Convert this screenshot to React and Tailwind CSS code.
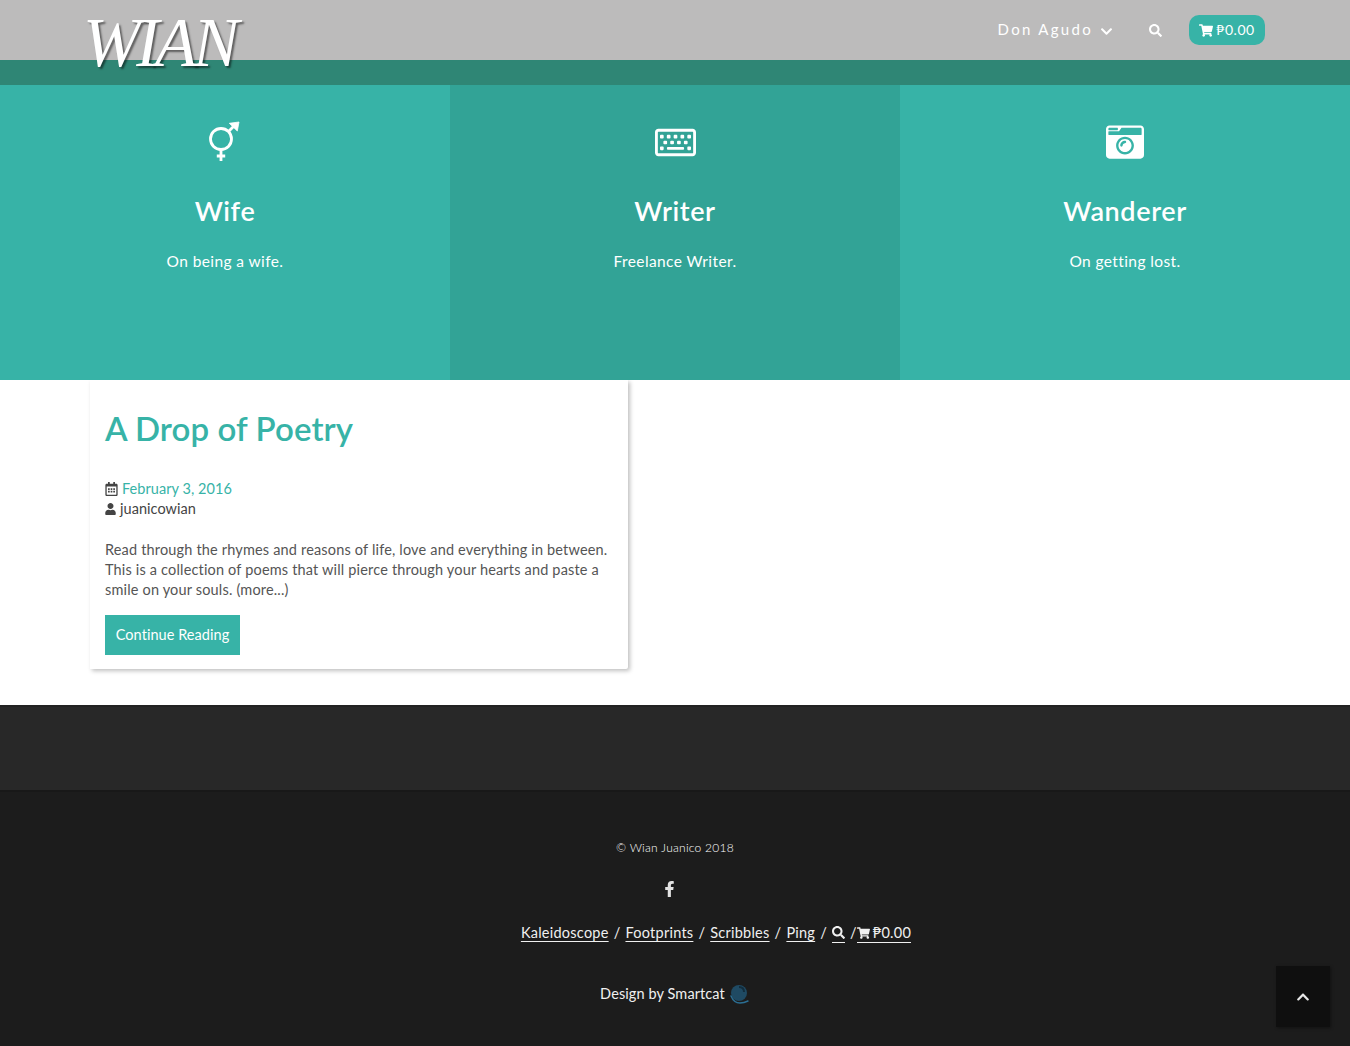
import React from "react";
import { FaRegKeyboard, FaCameraRetro, FaShoppingCart, FaSearch, FaChevronDown, FaChevronUp, FaUser, FaFacebookF, FaRegCalendarAlt } from "react-icons/fa";

const body = { fontFamily: '"Lato", "Open Sans", sans-serif' };

function GenderIcon() {
  return (
    <svg className="-mt-[4px] -ml-[2px]" width="36" height="44" viewBox="0 0 36 44" fill="none" stroke="white" strokeWidth="2.8">
      <circle cx="15" cy="21" r="10.5" />
      <path d="M22.5 13.5L30 6" />
      <path d="M23.3 5.3L33 4L31.3 13Z" fill="white" strokeWidth="0.8" />
      <path d="M15 31.5V43M10.8 38H19.2" />
    </svg>
  );
}

function Feature({ icon, title, text, dark }) {
  return (
    <div className={`flex-1 h-[295px] flex flex-col items-center text-white ${dark ? "bg-[#32a396]" : "bg-[#37b3a7]"}`}>
      <div className="h-[111px] flex items-center justify-center pt-[2px]">{icon}</div>
      <h3 className="text-[27px] leading-[30px] font-semibold tracking-[0.6px]">{title}</h3>
      <p className="mt-[23px] text-[15.5px] leading-[24px] font-normal tracking-[0.4px]">{text}</p>
    </div>
  );
}

function Sep() {
  return <span className="mx-[5px]">/</span>;
}

export default function App() {
  return (
    <div style={body} className="relative w-full h-[1046px] overflow-hidden bg-white text-[#555]">
      <header className="relative z-10 h-[60px] bg-[#bcbbbb] flex items-start pl-[83px] pr-[85px]">
        <div
          className="mt-[9px] h-[50px] text-[69px] leading-[69px] italic text-white tracking-[-4.2px] [text-shadow:2px_2px_2px_rgba(0,0,0,0.5)]"
          style={{ fontFamily: '"Liberation Serif", serif' }}
        >
          WIAN
        </div>
        <nav className="ml-auto h-[60px] flex items-center text-white">
          <span className="text-[15px] tracking-[2.3px] font-normal pb-[2px]">Don Agudo</span>
          <FaChevronDown className="ml-[7px] w-[13px] h-[13px] mt-[2px]" />
          <FaSearch className="ml-[36px] w-[13px] h-[13px]" />
          <div className="ml-[27px] w-[76px] h-[30px] rounded-[10px] bg-[#37b3a7] flex items-center justify-center text-[14px] tracking-[0.5px]">
            <FaShoppingCart className="w-[14px] h-[13px] mr-[3px]" />
            <span className="pb-[2px]">₱0.00</span>
          </div>
        </nav>
      </header>

      <div className="h-[25px] bg-[#2f8675]" />

      <section className="flex">
        <Feature icon={<GenderIcon />} title="Wife" text="On being a wife." />
        <Feature dark icon={<FaRegKeyboard className="w-[41px] h-[41px] mt-[1px]" />} title="Writer" text="Freelance Writer." />
        <Feature icon={<FaCameraRetro className="w-[38px] h-[38px]" />} title="Wanderer" text="On getting lost." />
      </section>

      <main className="h-[325px]">
        <article className="ml-[90px] w-[538px] h-[289px] pt-[28px] px-[15px] rounded-br-[2px] shadow-[2px_2px_4px_rgba(0,0,0,0.25)]">
          <h2 className="text-[33px] leading-[40px] font-semibold text-[#37b3a7] tracking-[0.1px]">A Drop of Poetry</h2>
          <div className="mt-[31px] text-[14.5px] leading-[20px] tracking-[0.05px]">
            <div className="flex items-center font-normal">
              <FaRegCalendarAlt className="w-[13px] h-[14px] text-[#444]" />
              <span className="ml-[4px] text-[#37b3a7]">February 3, 2016</span>
            </div>
            <div className="flex items-center font-normal text-[#444]">
              <FaUser className="w-[11px] h-[12px] mr-[4px] text-[#444]" />
              <span>juanicowian</span>
            </div>
          </div>
          <p className="mt-[21px] text-[14.5px] leading-[20px] font-normal tracking-[0.17px] whitespace-nowrap">
            Read through the rhymes and reasons of life, love and everything in between.
            <br />
            This is a collection of poems that will pierce through your hearts and paste a
            <br />
            smile on your souls. (more...)
          </p>
          <button className="mt-[15px] w-[135px] h-[40px] bg-[#37b3a7] text-white text-[14.5px] font-normal tracking-[0.05px]">
            Continue Reading
          </button>
        </article>
      </main>

      <div className="h-[85px] bg-[#282828] border-t-2 border-[#222]" />

      <footer className="h-[256px] bg-[#1c1c1c] border-t-2 border-[#181818] text-[#f0f0f0] flex flex-col items-center">
        <p className="mt-[48px] h-[16px] text-[12px] leading-[16px] font-light text-white tracking-[0.25px]">© Wian Juanico 2018</p>
        <div className="mt-[23px] h-[20px] pr-[12px] flex items-center text-[#e2e2e2]">
          <FaFacebookF className="w-[13px] h-[16px]" />
        </div>
        <div className="mt-[24px] h-[20px] pl-[82px] flex items-center text-[14.5px] leading-[20px] font-normal tracking-[0.25px] whitespace-nowrap">
          <a className="underline underline-offset-[3px]">Kaleidoscope</a>
          <Sep />
          <a className="underline underline-offset-[3px]">Footprints</a>
          <Sep />
          <a className="underline underline-offset-[3px]">Scribbles</a>
          <Sep />
          <a className="underline underline-offset-[3px]">Ping</a>
          <Sep />
          <a className="border-b border-[#f0f0f0] h-[19px] flex items-center"><FaSearch className="w-[13px] h-[13px]" /></a>
          <span className="ml-[5px]">/</span>
          <a className="border-b border-[#f0f0f0] h-[19px] flex items-center">
            <FaShoppingCart className="w-[13px] h-[12px] mr-[3px]" />
            <span>₱0.00</span>
          </a>
        </div>
        <div className="mt-[39px] h-[24px] flex items-center text-[14.5px] font-normal tracking-[0.1px]">
          <span>Design by Smartcat</span>
          <svg className="ml-[3px]" width="22" height="24" viewBox="0 0 22 24" fill="none">
            <circle cx="11" cy="11" r="8" fill="#1f4a63" />
            <path d="M3 14c2 5 5 7 9 7s6-1 8-2" stroke="#2b6f94" strokeWidth="1.4" strokeLinecap="round" />
            <path d="M11 5c3 0 5 2 5 5" stroke="#122d3d" strokeWidth="2" />
          </svg>
        </div>
      </footer>

      <button className="absolute left-[1276px] top-[966px] w-[54px] h-[61px] bg-[#0f0f0f] shadow-[1px_1px_3px_rgba(0,0,0,0.4)] flex items-center justify-center text-[#e8e8e8]">
        <FaChevronUp className="w-[14px] h-[14px]" />
      </button>
    </div>
  );
}
